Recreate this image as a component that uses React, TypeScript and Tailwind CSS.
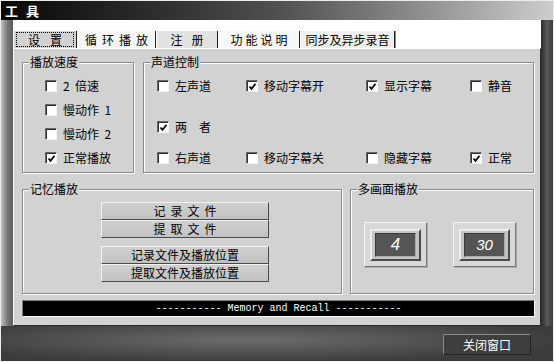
import type { ReactNode } from 'react'

const tabs = [
	{ label: '设置', w: 'w-[64px]', bg: 'bg-[#d2d2d2]', track: 'tracking-[10px] pl-[10px]', active: true },
	{ label: '循环播放', w: 'w-[79px]', bg: 'bg-[#f6f6f6]', track: 'tracking-[5px] pl-[5px]' },
	{ label: '注册', w: 'w-[62px]', bg: 'bg-[#e2e2e2]', track: 'tracking-[9px] pl-[9px]' },
	{ label: '功能说明', w: 'w-[82px]', bg: 'bg-[#f8f8f8]', track: 'tracking-[3px] pl-[3px]' },
	{ label: '同步及异步录音', w: 'w-[95px]', bg: 'bg-[#efefef]', track: '' },
]

function Check({ checked }: { checked?: boolean }) {
	return (
		<span className="flex h-[12px] w-[12px] shrink-0 items-center justify-center border border-t-[#6a6a6a] border-l-[#6a6a6a] border-b-[#f4f4f4] border-r-[#f4f4f4] bg-white shadow-[inset_1px_1px_0_#303030]">
			{checked && (
				<svg width="9" height="9" viewBox="0 0 9 9">
					<path d="M1.5 4.5 L3.5 6.8 L7.5 1.8" fill="none" stroke="#000" strokeWidth="1.7" />
				</svg>
			)}
		</span>
	)
}

function Option({ label, checked }: { label: string; checked?: boolean }) {
	return (
		<div className="flex h-[24px] items-center gap-[6px] whitespace-pre">
			<Check checked={checked} />
			<span>{label}</span>
		</div>
	)
}

function Group({ title, className, children }: { title: string; className: string; children?: ReactNode }) {
	return (
		<fieldset
			className={`border border-[#8a8a8a] shadow-[inset_1px_1px_0_#fff,1px_1px_0_#fff] ${className}`}
		>
			<legend className="ml-[6px] bg-[#d2d2d2] px-px text-[12px] leading-[14px]">{title}</legend>
			{children}
		</fieldset>
	)
}

function MemButton({ label, spaced }: { label: string; spaced?: boolean }) {
	return (
		<button
			className={`flex h-[18px] w-[168px] items-center justify-center border border-t-[#f2f2f2] border-l-[#f2f2f2] border-b-[#4a4a4a] border-r-[#4a4a4a] bg-linear-to-b from-[#d0d0d0] to-[#c2c2c2] text-[12px] leading-none ${
				spaced ? 'tracking-[5px] pl-[5px]' : ''
			}`}
		>
			{label}
		</button>
	)
}

function ScreenButton({ n, size }: { n: string; size: string }) {
	return (
		<div className="flex h-[45px] w-[63px] items-center justify-center border border-t-[#f4f4f4] border-l-[#f4f4f4] border-b-[#7a7a7a] border-r-[#7a7a7a] bg-[#d8d8d8] shadow-[1px_1px_0_#aaa]">
			<div className="flex h-[32px] w-[51px] items-center justify-center border-2 border-t-[#ececec] border-l-[#ececec] border-b-[#4a4a4a] border-r-[#4a4a4a] bg-[#c4c4c4]">
				<div
					className={`flex h-[24px] w-[41px] items-center justify-center border border-t-[#3a3a3a] border-l-[#3a3a3a] border-b-[#aaa] border-r-[#aaa] bg-[#555555] font-['Liberation_Sans',sans-serif] italic text-white ${size}`}
				>
					{n}
				</div>
			</div>
		</div>
	)
}

export default function App() {
	return (
		<div className="h-[362px] w-[554px] overflow-hidden bg-[#ececec] p-px font-['Noto_Sans_CJK_SC',sans-serif] text-[12px] leading-[14px] text-black">
			<div className="flex h-full flex-col bg-[#4a4a4a]">
				{/* title bar */}
				<div className="flex h-[19px] shrink-0 items-center bg-linear-to-r from-[#080808] via-[#505050] to-[#cdcdcd] pl-[4px] text-[13px] font-bold tracking-[8px] text-white">
					工具
				</div>

				<div className="flex h-[306px] shrink-0">
					<div className="w-[12px] bg-linear-to-r from-[#c4c4c4] via-[#7c7c7c] to-[#5a5a5a]" />

					<div className="flex w-[528px] flex-col">
						{/* tab strip */}
						<div className="flex h-[28px] items-end bg-white">
							{tabs.map((t) => (
								<div
									key={t.label}
									className={`flex h-[17px] items-center justify-center border-l border-r border-l-white border-r-[#1e1e1e] shadow-[1px_0_0_#8a8a8a] ${t.w} ${t.bg}`}
								>
									{t.active ? (
										<span className="flex h-[15px] w-[58px] items-center justify-center border border-dotted border-black">
											<span className={t.track}>{t.label}</span>
										</span>
									) : (
										<span className={t.track}>{t.label}</span>
									)}
								</div>
							))}
						</div>

						{/* panel */}
						<div className="flex flex-1 flex-col border border-t-white border-l-white border-b-[#2a2a2a] border-r-[#2a2a2a] bg-[#d2d2d2] pt-[6px] pl-[8px] pr-[6px]">
							<div className="flex gap-[9px]">
								<Group title="播放速度" className="h-[118px] w-[112px]">
									<div className="flex flex-col pt-[5px] pl-[22px]">
										<Option label="2  倍速" />
										<Option label="慢动作  1" />
										<Option label="慢动作  2" />
										<Option label="正常播放" checked />
									</div>
								</Group>
								<Group title="声道控制" className="h-[118px] w-[391px]">
									<div className="flex flex-col pt-[5px] pl-[13px]">
										<div className="grid grid-cols-[89px_120px_104px_1fr]">
											<Option label="左声道" />
											<Option label="移动字幕开" checked />
											<Option label="显示字幕" checked />
											<Option label="静音" />
										</div>
										<div className="mt-[17px]">
											<Option label="两　者" checked />
										</div>
										<div className="mt-[7px] grid grid-cols-[89px_120px_104px_1fr]">
											<Option label="右声道" />
											<Option label="移动字幕关" />
											<Option label="隐藏字幕" />
											<Option label="正常" checked />
										</div>
									</div>
								</Group>
							</div>

							<div className="mt-[9px] flex gap-[8px]">
								<Group title="记忆播放" className="h-[112px] w-[320px]">
									<div className="ml-[78px] mt-[6px] flex flex-col">
										<MemButton label="记录文件" spaced />
										<MemButton label="提取文件" spaced />
										<div className="h-[8px]" />
										<MemButton label="记录文件及播放位置" />
										<MemButton label="提取文件及播放位置" />
									</div>
								</Group>
								<Group title="多画面播放" className="h-[112px] w-[184px]">
									<div className="ml-[13px] mt-[26px] flex gap-[26px]">
										<ScreenButton n="4" size="text-[17px]" />
										<ScreenButton n="30" size="text-[15px]" />
									</div>
								</Group>
							</div>

							<div className="mt-[6px] flex h-[17px] w-[513px] items-center justify-center border border-t-[#7a7a7a] border-l-[#7a7a7a] border-b-white border-r-white bg-black font-['Liberation_Mono',monospace] text-[10px] whitespace-pre text-white">
								----------- Memory and Recall -----------
							</div>
						</div>
					</div>

					<div className="flex-1 bg-linear-to-r from-[#2c2c2c] via-[#5a5a5a] to-[#3a3a3a]" />
				</div>

				{/* bottom */}
				<div className="flex flex-1 items-start justify-end bg-[radial-gradient(ellipse_at_45%_40%,#6c6c6c,#3c3c3c_75%)] pt-[8px] pr-[22px]">
					<button className="flex h-[21px] w-[88px] items-center justify-center rounded-[2px] border border-t-[#8a8a8a] border-l-[#8a8a8a] border-b-[#222] border-r-[#222] bg-[#3e3e3e] text-[12px] text-white">
						关闭窗口
					</button>
				</div>
			</div>
		</div>
	)
}
